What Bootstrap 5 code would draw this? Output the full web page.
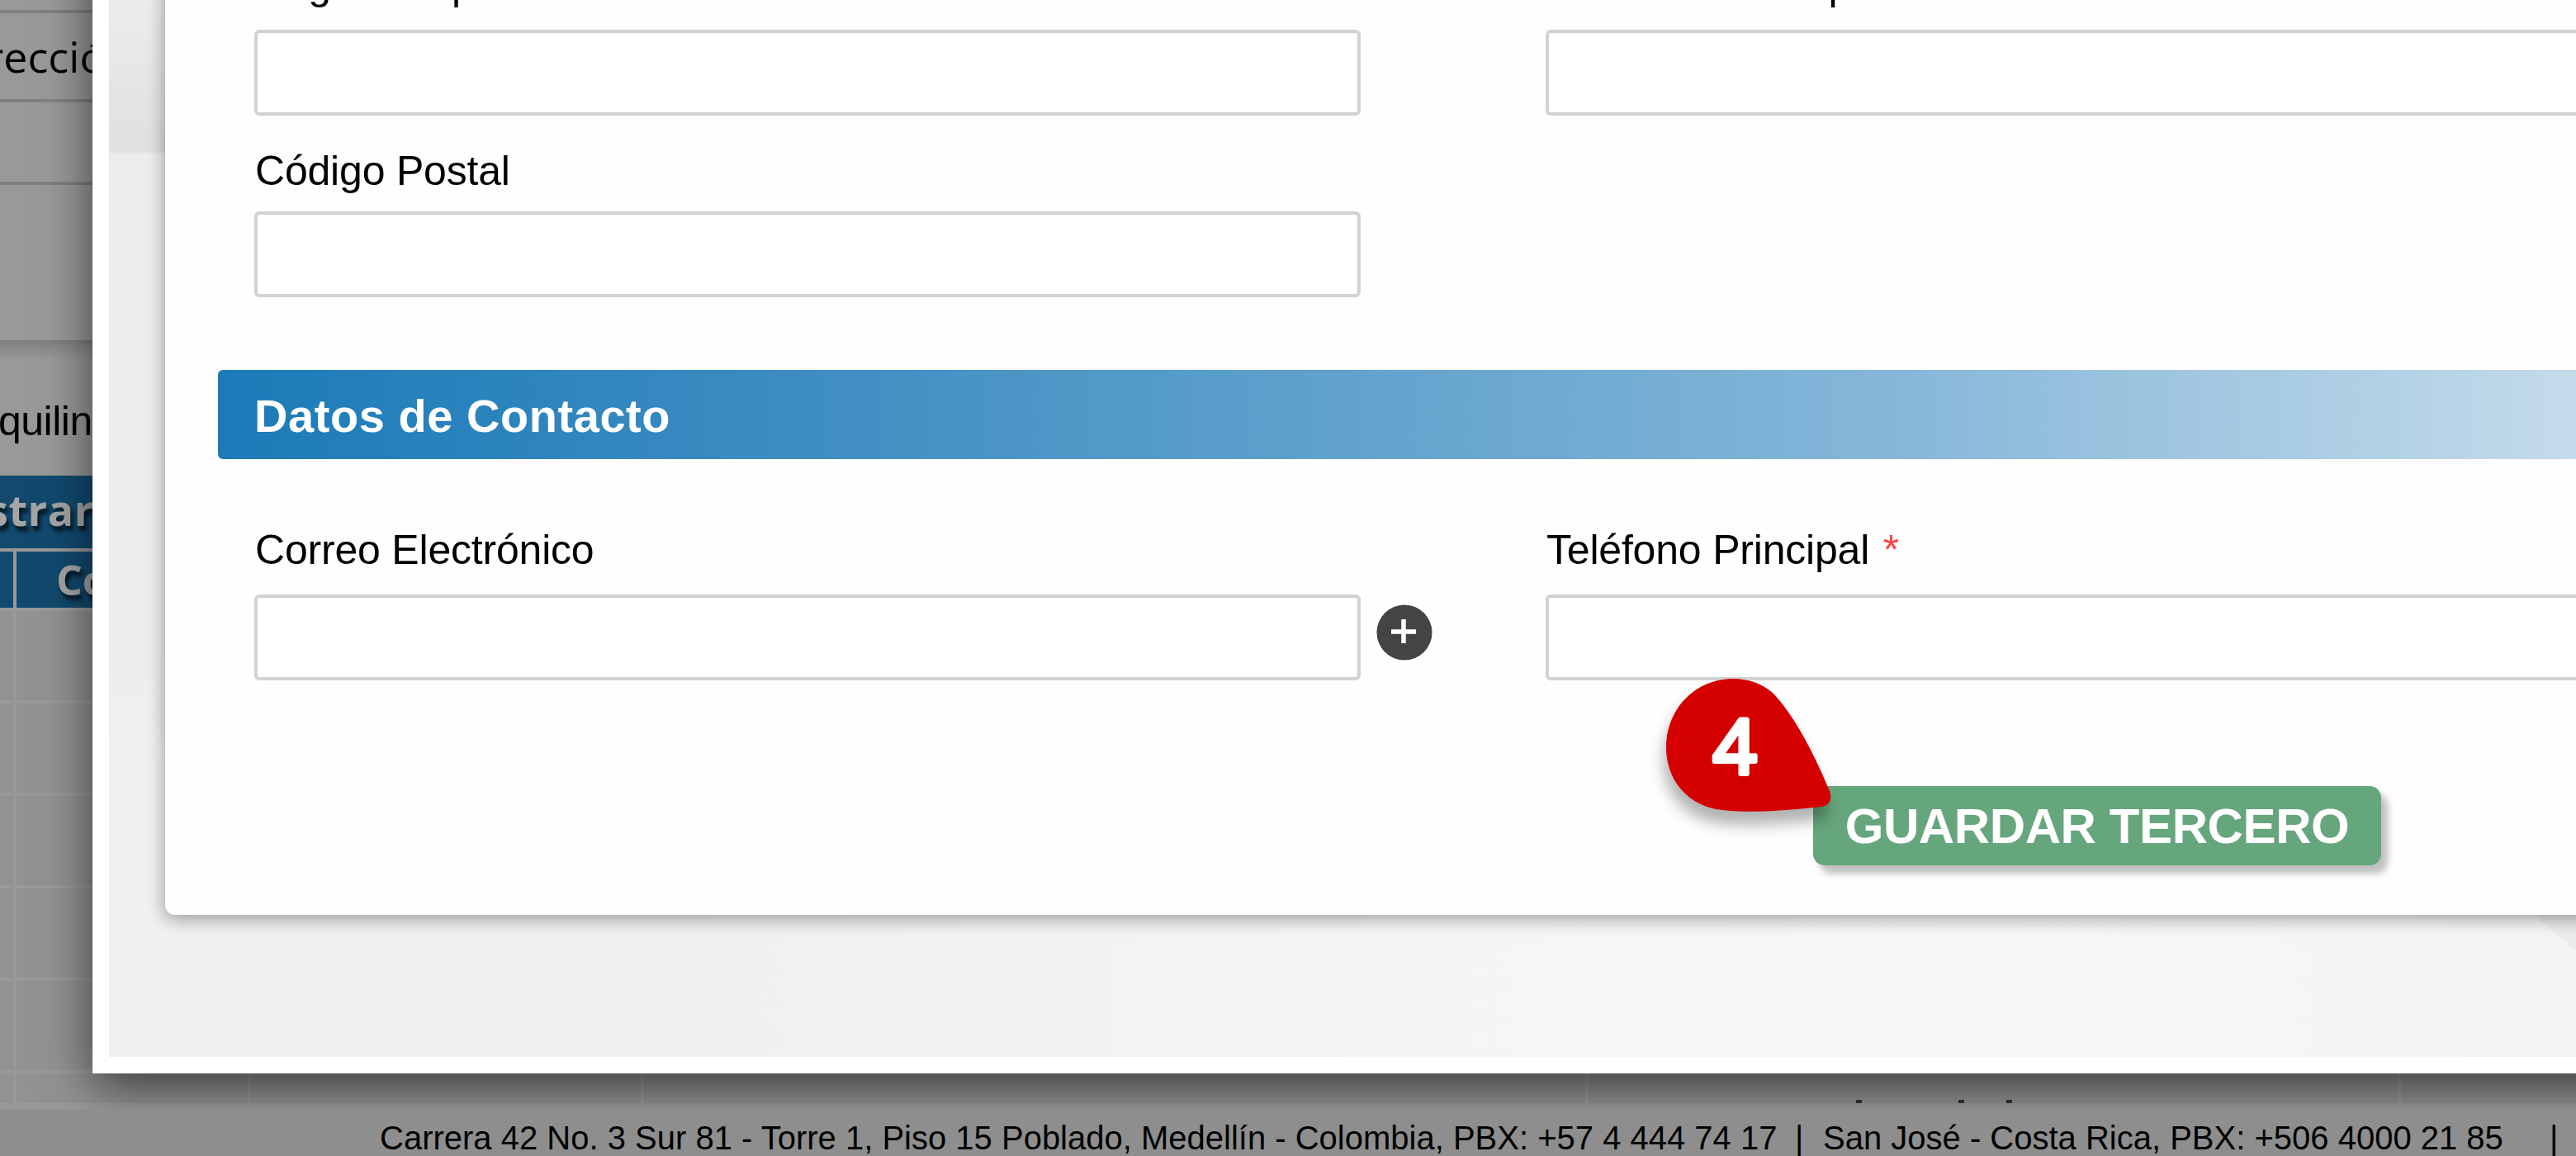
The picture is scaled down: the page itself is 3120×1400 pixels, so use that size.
<!DOCTYPE html>
<html lang="es">
<head>
    <meta charset="UTF-8">
    <meta name="viewport" content="width=device-width, initial-scale=1.0">
    <title>Guardar Tercero</title>
    <!-- Bootstrap CSS -->
    <link href="https://cdn.jsdelivr.net/npm/bootstrap@5.3.0/dist/css/bootstrap.min.css" rel="stylesheet">
    <style>
        body { font-family: "Liberation Sans", Arial, sans-serif; color: #000; background: #999; }
        .page { width: 3120px; height: 1400px; }

        /* Page behind the dialog */
        .back-page { padding-top: 12px; }
        .back-line { height: 4px; background: #808080; }
        .back-cell { height: 104px; font: 52px/104px "Open Sans", sans-serif; text-indent: -17px; }
        .back-empty { height: 96px; }
        .back-block { height: 188px; }
        .back-shadow { height: 20px; background: linear-gradient(#858585, #999); }
        .back-note { height: 140px; padding-top: 44px; font-size: 50px; line-height: 60px; text-indent: -2px; letter-spacing: -.5px; }
        .back-title, .back-head { background: #124a6f; color: #a5a5a5; font-family: "Open Sans", sans-serif; font-weight: 700; text-shadow: 3px 6px 5px rgba(0, 0, 0, .7); }
        .back-title { height: 92px; border-bottom: 4px solid #999; font-size: 52px; line-height: 82px; text-indent: -16px; letter-spacing: .6px; }
        .back-head { height: 68px; font-size: 50px; line-height: 68px; border-left: 4px solid #999; margin-left: 16px; padding-left: 48px; box-shadow: -16px 0 #124a6f; }
        .back-grid { background: #929292; height: 600px; }
        .back-row { height: 112px; border-top: 4px solid #999; }
        .grid-col { border-right: 4px solid #999; }
        .grid-a { width: 20px; }
        .grid-b { width: 284px; }
        .grid-c { width: 476px; }
        .grid-d { width: 1144px; }
        .grid-e { width: 984px; }
        .cut-text { left: 2248px; top: 1332px; }

        /* Dialog */
        .dialog-box { left: 112px; top: -68px; width: 3200px; height: 1368px; border: 20px solid #fff; box-shadow: 0 16px 56px rgba(0, 0, 0, .6); overflow: hidden;
            background: linear-gradient(to top right, transparent 50%, #ebebeb 52%) 2936px 1156px / 52px 44px no-repeat,
                linear-gradient(to right, #f0f0f0, #f0f0f0 22%, #f5f5f5 50%, #f7f7f7 72%, #f4f4f4 94%); }
        .dialog-side { width: 68px; background: linear-gradient(#ececec 48px, #e0e0e0 231px, #ededed 235px, #ededed 828px, #f0f0f0 968px); }
        .dialog-card { width: 3200px; height: 1156px; border-radius: 0 0 0 12px; background: #fefefe; box-shadow: 0 4px 20px 2px rgba(0, 0, 0, .33); padding-left: 108px; }
        .field-label { font-size: 50px; line-height: 60px; height: 84px; white-space: nowrap; letter-spacing: -.2px; padding-left: 1px; }
        .field-label.field-region { letter-spacing: .2px; }
        .field-required { color: #ff4444; margin-left: 3px; }
        .field-postal { margin-top: 37px; }
        .field-postal .field-label { height: 79px; }
        .field-input { height: 104px; border: 4px solid #d2d2d2; border-radius: 6px; background: #fff; padding: 0; }
        .field-left { width: 1340px; }
        .field-right { width: 1400px; }
        .field-gap { width: 224px; padding: 96px 0 0 19px; }
        .section-bar { height: 108px; margin: 88px 0 80px -44px; padding-left: 44px; border-radius: 6px; background: linear-gradient(to right, #1b7bb8, #3a8bc1 636px, #5a9ecb 1236px, #86b7d9 2036px, #c4dbea 2856px, #d2e3ef); color: #fff; font-size: 56px; font-weight: 700; line-height: 112px; letter-spacing: .55px; }
        .save-btn { width: 688px; height: 96px; margin: 128px 0 0 1888px; padding: 0; border: 0; border-radius: 14px; background: #66a67d; color: #fff; font-size: 60px; line-height: 91px; font-weight: 700; letter-spacing: -.4px; box-shadow: 8px 10px 8px rgba(0, 0, 0, .25); white-space: nowrap; }
        .step-pin { left: 1990px; top: 800px; filter: drop-shadow(-3px 16px 9px rgba(0, 0, 0, .3)); }

        .foot-bar { top: 1344px; height: 56px; background: #8e8e8e; font-size: 40px; line-height: 68px; padding-left: 460px; white-space: pre; }
        .foot-co { width: 1714px; }
        .foot-cr { width: 880px; }
        .foot-sep { width: 34px; }
    </style>
</head>
<body>
<div class="page position-relative overflow-hidden">
    <!-- Page behind -->
    <div class="back-page d-flex flex-column">
        <div class="back-line"></div>
        <div class="back-cell">rección</div>
        <div class="back-line"></div>
        <div class="back-empty"></div>
        <div class="back-line"></div>
        <div class="back-block"></div>
        <div class="back-line"></div>
        <div class="back-shadow"></div>
        <div class="back-note">quilino</div>
        <div class="back-title">strar</div>
        <div class="back-head">Co</div>
        <div class="back-grid position-relative">
            <div class="back-row"></div>
            <div class="back-row"></div>
            <div class="back-row"></div>
            <div class="back-row"></div>
            <div class="back-row"></div>
            <div class="back-row"></div>
            <div class="d-flex position-absolute top-0 start-0 h-100">
                <div class="grid-col grid-a"></div>
                <div class="grid-col grid-b"></div>
                <div class="grid-col grid-c"></div>
                <div class="grid-col grid-d"></div>
                <div class="grid-col grid-e"></div>
            </div>
        </div>
    </div>

    <!-- Dialog -->
    <div class="dialog-box position-absolute d-flex">
        <div class="dialog-side flex-shrink-0"></div>
        <div class="dialog-card flex-shrink-0">
            <div class="d-flex">
                <div class="field-left">
                    <div class="field-label field-region">Región Departamento</div>
                    <input class="field-input form-control" type="text">
                </div>
                <div class="field-gap"></div>
                <div class="field-right">
                    <div class="field-label">Ciudad / Municipio</div>
                    <input class="field-input form-control" type="text">
                </div>
            </div>
            <div class="field-left field-postal">
                <div class="field-label">Código Postal</div>
                <input class="field-input form-control" type="text">
            </div>

            <div class="section-bar">Datos de Contacto</div>

            <div class="d-flex">
                <div class="field-left">
                    <div class="field-label">Correo Electrónico</div>
                    <input class="field-input form-control" type="text">
                </div>
                <div class="field-gap">
                    <svg class="d-block" width="68" height="68" viewBox="0 0 68 68">
                        <circle cx="34" cy="34" r="33.5" fill="#444"/>
                        <path d="M33 18v29M18 33h30" stroke="#fff" stroke-width="5.5"/>
                    </svg>
                </div>
                <div class="field-right">
                    <div class="field-label">Teléfono Principal <span class="field-required">*</span></div>
                    <input class="field-input form-control" type="text">
                </div>
            </div>
            <button class="save-btn btn d-block" type="button">GUARDAR TERCERO</button>
        </div>
    </div>

    <!-- Step marker -->
    <svg class="step-pin position-absolute" width="240" height="200" viewBox="1990 800 240 200">
        <path d="M2099 822C2118 822 2135 828 2148 840C2172 866 2194 905 2216 958Q2221 974 2207 977Q2125 986 2086 981C2045 977 2018 945 2018 905C2018 858 2054 822 2099 822Z" fill="#d40000"/>
        <text x="2101" y="937" text-anchor="middle" font-family="Open Sans, sans-serif" font-weight="400" font-size="92" fill="#fff" stroke="#fff" stroke-width="6" stroke-linejoin="round">4</text>
    </svg>

    <!-- Tops of the clipped last row -->
    <svg class="cut-text position-absolute" width="192" height="4" viewBox="0 0 192 4">
        <path d="M0 2h7M124 2h7M182 2h7" stroke="#2a2a2a" stroke-width="4"/>
    </svg>

    <!-- Footer -->
    <footer class="foot-bar position-absolute start-0 w-100 d-flex"><span class="foot-co">Carrera 42 No. 3 Sur 81 - Torre 1, Piso 15 Poblado, Medellín - Colombia, PBX: +57 4 444 74 17</span><span class="foot-sep">|</span><span class="foot-cr">San José - Costa Rica, PBX: +506 4000 21 85</span><span>|</span></footer>
</div>
<!-- Bootstrap JS -->
<script src="https://cdn.jsdelivr.net/npm/bootstrap@5.3.0/dist/js/bootstrap.bundle.min.js"></script>
</body>
</html>
